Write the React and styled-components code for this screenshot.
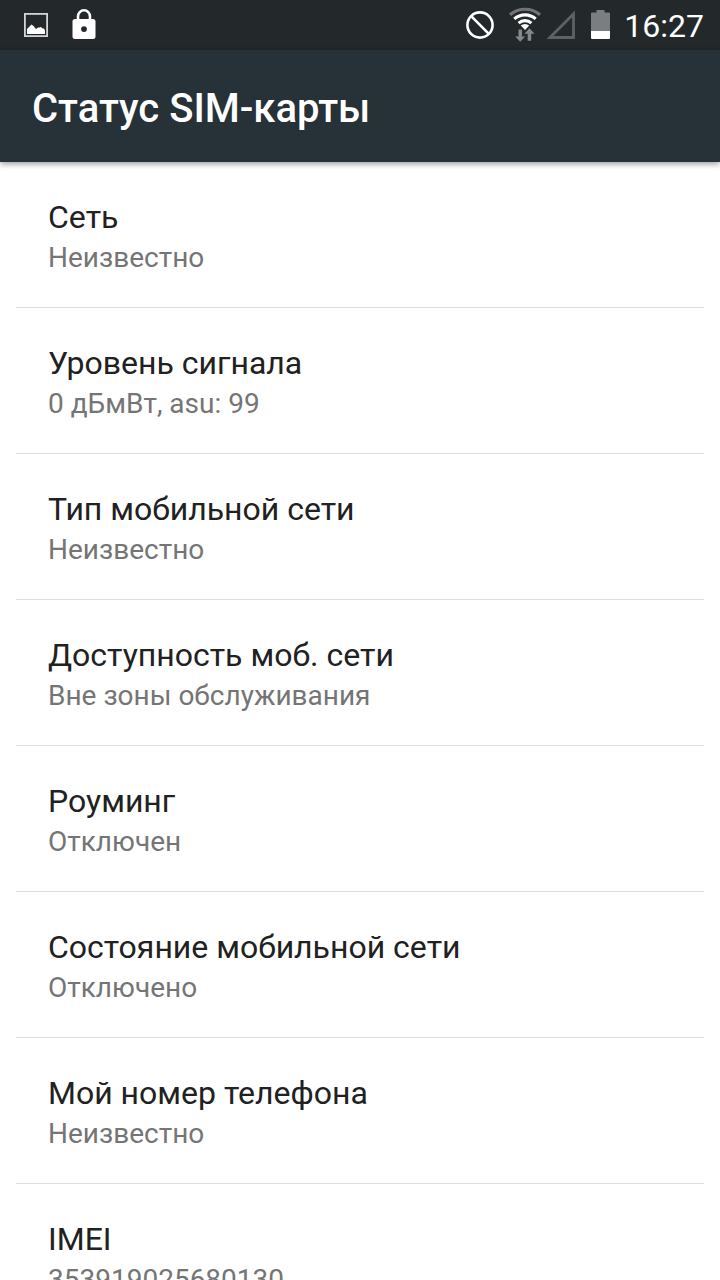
import React from 'react';
import styled, { createGlobalStyle } from 'styled-components';

const GlobalStyle = createGlobalStyle`
  * {
    box-sizing: border-box;
  }

  body {
    margin: 0;
    background-color: #fff;
    font-family: Roboto, "Noto Sans", sans-serif;
  }
`;

const Screen = styled.div`
  display: flex;
  flex-direction: column;
  height: 100vh;
  overflow: hidden;
`;

const StatusBar = styled.div`
  display: flex;
  flex-shrink: 0;
  align-items: center;
  justify-content: space-between;
  height: 50px;
  padding: 0 16px 0 24px;
  background-color: #23282b;
  color: #fff;
`;

const IconGroup = styled.div`
  display: flex;
  align-items: center;
  gap: ${({ $gap }) => $gap}px;
`;

const Icon = styled.svg`
  display: block;
  flex-shrink: 0;
`;

const Clock = styled.time`
  font-size: 32px;
  line-height: 38px;
  padding-top: 2px;
`;

const Header = styled.header`
  z-index: 1;
  flex-shrink: 0;
  padding: 35px 32px 29px;
  background-color: #263138;
  box-shadow: 0 2px 6px rgba(0, 0, 0, .4);
`;

const Title = styled.h1`
  margin: 0;
  color: #fff;
  font-size: 40px;
  font-weight: 500;
  line-height: 48px;
`;

const List = styled.dl`
  flex: 1;
  min-height: 0;
  margin: 0;
  padding: 0 16px;
  overflow: hidden;
`;

const Row = styled.div`
  padding: 36px 32px 27px;
  border-bottom: 1px solid #dedede;
`;

const Name = styled.dt`
  color: #212121;
  font-size: 32px;
  line-height: 38px;
`;

const Value = styled.dd`
  margin: 0;
  color: #757575;
  font-size: 28px;
  line-height: 44px;
`;

const rows = [
  { name: 'Сеть', value: 'Неизвестно' },
  { name: 'Уровень сигнала', value: '0 дБмВт, asu: 99' },
  { name: 'Тип мобильной сети', value: 'Неизвестно' },
  { name: 'Доступность моб. сети', value: 'Вне зоны обслуживания' },
  { name: 'Роуминг', value: 'Отключен' },
  { name: 'Состояние мобильной сети', value: 'Отключено' },
  { name: 'Мой номер телефона', value: 'Неизвестно' },
  { name: 'IMEI', value: '353919025680130' },
];

const PictureIcon = () => (
  <Icon width="24" height="50" viewBox="0 0 24 50" aria-hidden="true">
    <rect x="0.9" y="13.9" width="22.2" height="22.2" fill="none" stroke="#d3d4d5" strokeWidth="1.8" />
    <path d="M3 34v-5l3-3 1.500-1.500 2 1.500 2.500 3 2-1.500h1.500l1.500-.5 1.500 1.500 1.500 0 1 2V34z" fill="#fff" />
  </Icon>
);

const LockIcon = () => (
  <Icon width="24" height="50" viewBox="0 0 24 50" aria-hidden="true">
    <path d="M6 20v-3.500a6 6.200 0 0 1 12 0V20" fill="none" stroke="#fff" strokeWidth="2.600" />
    <path
      d="M3 19h18a2.500 2.500 0 0 1 2.500 2.500v15a2.500 2.500 0 0 1-2.500 2.500H3a2.500 2.500 0 0 1-2.500-2.500v-15A2.500 2.500 0 0 1 3 19zm9 7.200a2.900 2.900 0 1 0 0 5.800 2.900 2.900 0 0 0 0-5.800z"
      fill="#fff"
      fillRule="evenodd"
    />
  </Icon>
);

const BlockedIcon = () => (
  <Icon width="28" height="50" viewBox="0 0 28 50" aria-hidden="true">
    <g fill="none" stroke="#fff" strokeWidth="2.600">
      <circle cx="14" cy="25" r="12.600" />
      <path d="M5.200 16.200l17.600 17.600" />
    </g>
  </Icon>
);

const WifiIcon = () => (
  <Icon width="34" height="50" viewBox="0 0 34 50" aria-hidden="true">
    <g fill="none" strokeWidth="3.200">
      <path d="M2 14.800a23 23 0 0 1 30 0" stroke="#707476" />
      <path d="M6.300 18.900a16 16 0 0 1 21.400 0" stroke="#fff" />
      <path d="M10.600 23.100a9.700 9.700 0 0 1 12.800 0" stroke="#fff" />
    </g>
    <path d="M12.800 25.600a6 6 0 0 1 8.400 0L17 30z" fill="#fff" />
    <path d="M10.500 29.500h3.500v7h3.200l-5 5.300-5-5.300h3.300zM19.700 40.700v-7h-3.200l5-5.500 5 5.500h-3.300v7z" fill="#84888a" />
  </Icon>
);

const SignalIcon = () => (
  <Icon width="31" height="50" viewBox="0 0 31 50" aria-hidden="true">
    <path d="M4 37.500L27.500 14v23.500z" fill="none" stroke="#5e6264" strokeWidth="2.800" />
  </Icon>
);

const BatteryIcon = () => (
  <Icon width="19" height="50" viewBox="0 0 19 50" aria-hidden="true">
    <path d="M0 31V13.500a1 1 0 0 1 1-1h4.500V10h8v2.500H18a1 1 0 0 1 1 1V31z" fill="#7b7e80" />
    <path d="M0 31h19v7a1 1 0 0 1-1 1H1a1 1 0 0 1-1-1z" fill="#fff" />
  </Icon>
);

export default function App() {
  return (
    <Screen>
      <GlobalStyle />
      <StatusBar>
        <IconGroup $gap={24}>
          <PictureIcon />
          <LockIcon />
        </IconGroup>
        <IconGroup $gap={14}>
          <BlockedIcon />
          <IconGroup $gap={4}>
            <WifiIcon />
            <SignalIcon />
          </IconGroup>
          <BatteryIcon />
          <Clock>16:27</Clock>
        </IconGroup>
      </StatusBar>
      <Header>
        <Title>Статус SIM-карты</Title>
      </Header>
      <List>
        {rows.map(({ name, value }) => (
          <Row key={name}>
            <Name>{name}</Name>
            <Value>{value}</Value>
          </Row>
        ))}
      </List>
    </Screen>
  );
}
